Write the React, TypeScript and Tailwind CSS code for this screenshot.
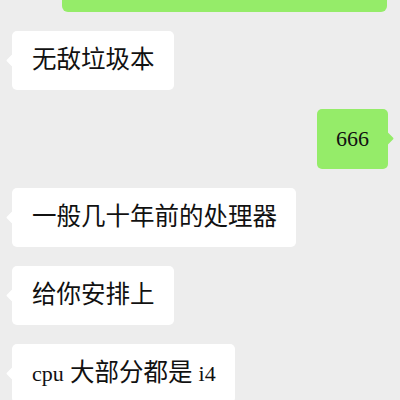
const cjk = "font-['Liberation_Serif','Noto_Sans_CJK_SC',serif]"

function Left({ children }: { children: React.ReactNode }) {
  return (
    <div className="flex justify-start pl-3">
      <div className="relative flex h-[59px] items-center rounded-[5px] bg-white pl-5 pr-[19px] text-[24.5px] text-[#111]">
        <span className="absolute left-[-4px] top-[25px] h-[9px] w-[9px] rotate-45 rounded-[1px] bg-white" />
        <span className="relative whitespace-nowrap leading-none">{children}</span>
      </div>
    </div>
  )
}

function Right({ children }: { children: React.ReactNode }) {
  return (
    <div className="flex justify-end pr-3">
      <div className="relative flex h-[60px] items-center rounded-[5px] bg-[#95ec69] px-[19px] text-[22px] text-[#111]">
        <span className="absolute right-[-4px] top-[25px] h-[9px] w-[9px] rotate-45 rounded-[1px] bg-[#95ec69]" />
        <span className="relative whitespace-nowrap leading-none">{children}</span>
      </div>
    </div>
  )
}

export default function App() {
  return (
    <div className={`flex h-[400px] w-[400px] flex-col gap-[19px] overflow-hidden bg-[#ededed] ${cjk}`}>
      <div className="ml-[62px] mr-[13px] h-[12px] shrink-0 rounded-b-[6px] bg-[#95ec69]" />
      <Left>无敌垃圾本</Left>
      <Right>666</Right>
      <Left>一般几十年前的处理器</Left>
      <Left>给你安排上</Left>
      <Left>
        <span className="text-[22px]">cpu</span> 大部分都是 <span className="text-[22px]">i4</span>
      </Left>
    </div>
  )
}
